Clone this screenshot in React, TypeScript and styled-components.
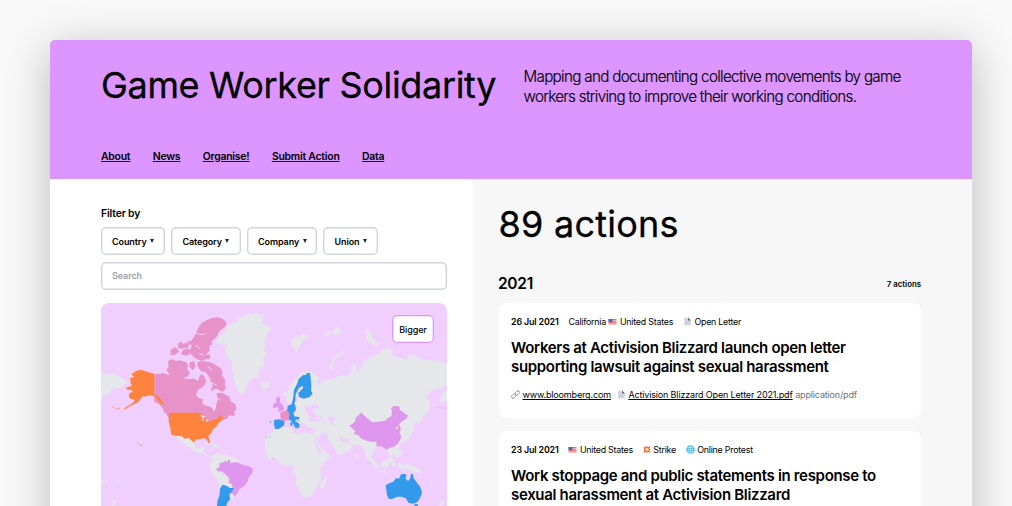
import React from "react";
import styled, { createGlobalStyle } from "styled-components";

const GlobalStyle = createGlobalStyle`
  * { box-sizing: border-box; }
  html, body { margin: 0; height: 506px; overflow: hidden; }
  body { background: #f9f9f9; color: #000; font-family: Inter, "Liberation Sans", sans-serif; }
  h1, h2, h3, p { margin: 0; }
  a { color: inherit; text-underline-offset: 1px; text-decoration-thickness: 1px; }
`;

const Stage = styled.div`
  height: 506px;
  padding: 40px 40px 0 50px;
  overflow: hidden;
`;

const Window = styled.div`
  width: 922px;
  height: 520px;
  border-radius: 5px 5px 0 0;
  background: #f7f7f7;
  box-shadow: 0 8px 46px rgba(0, 0, 0, 0.25);
`;

const Header = styled.header`
  height: 139.4px;
  padding: 24px 51px 0;
  border-radius: 5px 5px 0 0;
  background: #dd96ff;
`;

const Intro = styled.div`
  display: flex;
  height: 79px;
`;

const Title = styled.h1`
  width: 422.5px;
  font-size: 36px;
  line-height: 42px;
  font-weight: 400;
  letter-spacing: -0.34px;
  -webkit-text-stroke: 0.3px #000;
  white-space: nowrap;
`;

const Tagline = styled.p`
  padding-top: 2.5px;
  font-size: 15.2px;
  line-height: 20.5px;
  font-weight: 300;
  letter-spacing: -0.68px;
  -webkit-text-stroke: 0.15px #000;
  white-space: nowrap;
`;

const Nav = styled.nav`
  display: flex;
  gap: 22.5px;
  padding-top: 6.5px;
  font-size: 10.4px;
  line-height: 13px;
  font-weight: 600;
  letter-spacing: -0.22px;
`;

const Columns = styled.div`
  display: grid;
  grid-template-columns: 423px 1fr;
  height: 380px;
`;

const Sidebar = styled.aside`
  padding: 27.5px 26px 0 51px;
  background: #fff;
`;

const FilterLabel = styled.div`
  font-size: 10.4px;
  line-height: 14px;
  font-weight: 600;
  letter-spacing: -0.15px;
`;

const Filters = styled.div`
  display: flex;
  gap: 6.4px;
  margin-top: 6px;
`;

const FilterButton = styled.button<{ $width: number }>`
  display: flex;
  align-items: center;
  width: ${(p) => p.$width}px;
  height: 28.3px;
  padding: 0 0 0 11px;
  border: 0;
  border-radius: 5px;
  background: #fff;
  box-shadow: inset 0 0 0 1.4px #d1d5db;
  color: #000;
  font: 600 9px Inter, sans-serif;
  letter-spacing: -0.1px;
  white-space: nowrap;
`;

const Caret = styled.span`
  width: 0;
  height: 0;
  margin-left: 3.4px;
  border: 2px solid transparent;
  border-top: 4px solid #1f2937;
  border-bottom: 0;
`;

const SearchInput = styled.input`
  display: block;
  width: 346px;
  height: 28.3px;
  margin-top: 6.5px;
  padding: 0 11px;
  border: 0;
  border-radius: 5px;
  box-shadow: inset 0 0 0 1.4px #d1d5db;
  font: 600 9px Inter, sans-serif;
  letter-spacing: -0.1px;
  &::placeholder { color: #9ca3af; opacity: 1; }
`;

const MapPanel = styled.div`
  position: relative;
  width: 346px;
  height: 220px;
  margin-top: 13.3px;
  border-radius: 8px 8px 0 0;
  overflow: hidden;
  background: #f0cfff;
  svg { display: block; }
`;

const BiggerButton = styled.button`
  position: absolute;
  top: 12px;
  right: 13px;
  width: 42px;
  height: 28px;
  padding: 0;
  border: 0;
  border-radius: 5px;
  background: #fff;
  box-shadow: inset 0 0 0 1.3px #dd96ff;
  color: #000;
  font: 500 9px Inter, sans-serif;
  letter-spacing: -0.1px;
`;

const Feed = styled.main`
  padding: 23.5px 51px 0 25.5px;
`;

const Count = styled.h2`
  font-size: 36px;
  line-height: 42px;
  font-weight: 400;
  letter-spacing: 0.25px;
  -webkit-text-stroke: 0.3px #000;
`;

const YearRow = styled.div`
  display: flex;
  justify-content: space-between;
  align-items: center;
  height: 22px;
  margin: 27.8px 0 8.3px -0.5px;
`;

const Year = styled.h3`
  font-size: 15.5px;
  font-weight: 600;
  letter-spacing: -0.3px;
`;

const YearCount = styled.span`
  font-size: 7.8px;
  font-weight: 600;
  letter-spacing: 0.02px;
`;

const Card = styled.article`
  height: 115px;
  margin-bottom: 13px;
  padding: 12.2px 12.5px 0;
  border-radius: 8px;
  background: #fff;
`;

const Meta = styled.div`
  display: flex;
  gap: 9.8px;
  font-size: 8.9px;
  line-height: 13px;
  letter-spacing: -0.24px;
  white-space: nowrap;
  b { font-weight: 600; letter-spacing: -0.15px; }
`;

const Tag = styled.span`
  display: flex;
  align-items: center;
  gap: 2.5px;
`;

const Headline = styled.h3<{ $tracking: number }>`
  margin-top: 10px;
  font-size: 15px;
  line-height: 19.2px;
  font-weight: 600;
  letter-spacing: ${(p) => p.$tracking}px;
  white-space: nowrap;
`;

const Links = styled.div`
  display: flex;
  align-items: center;
  gap: 6px;
  margin-top: 11.8px;
  font-size: 9px;
  line-height: 13px;
  letter-spacing: -0.15px;
  white-space: nowrap;
`;

const Muted = styled.span`
  margin-left: -3.5px;
  color: #6b7280;
`;

const FlagIcon = () => (
  <svg width="9" height="9" viewBox="0 0 18 18">
    <path d="M1 4h16v10H1z" fill="#f3e3e6" />
    <path d="M1 5h16M1 8h16M1 11h16M1 14h16" stroke="#e24b57" strokeWidth="1.5" />
    <path d="M1 4h8v6H1z" fill="#3c6fb6" />
  </svg>
);

const PageIcon = () => (
  <svg width="9" height="9" viewBox="0 0 18 18">
    <path d="M2 1h8l6 6v10H2z" fill="#d9dde1" />
    <path d="M10 1v6h6z" fill="#5f6870" />
    <path d="M4 5h4M4 8h5M4 11h9M4 14h9" stroke="#b5bcc3" />
  </svg>
);

const LinkIcon = () => (
  <svg width="9" height="9" viewBox="0 0 18 18" fill="none" stroke="#6f8795" strokeWidth="1.7">
    <rect x="7.5" y="3" width="10" height="6" rx="3" transform="rotate(-45 12.5 6)" />
    <rect x="0.5" y="9" width="10" height="6" rx="3" transform="rotate(-45 5.5 12)" />
  </svg>
);

const BurstIcon = () => (
  <svg width="8" height="9" viewBox="0 0 18 18">
    <path d="M1 1l5 3 3-3 2 3 6-3-3 5 3 3-3 2 3 6-6-3-2 3-3-3-5 3 2-6-2-3 3-2z" fill="#fb5a36" />
    <path d="M6 6l3-1 3 1 1 3-1 3-3 1-3-1-1-3z" fill="#ffd24d" />
    <circle cx="9" cy="9" r="2" fill="#fff" />
  </svg>
);

const GlobeIcon = () => (
  <svg width="9" height="9" viewBox="0 0 18 18">
    <circle cx="9" cy="9" r="8.5" fill="#37b3e2" />
    <g fill="none" stroke="#d5f3ff" strokeWidth="1.1">
      <ellipse cx="9" cy="9" rx="4" ry="8" />
      <path d="M9 1v16M1 9h16M2.5 5h13M2.5 13h13" />
    </g>
  </svg>
);

const LAND = "#e5e7eb";
const PINK = "#e792c8";
const ORANGE = "#ff833d";
const BLUE = "#3399eb";
const VIOLET = "#df96ed";

const WorldMap = () => (
  <svg width="346" height="220" viewBox="101 303 346 220">
    <g transform="translate(95 300) scale(.33333)" strokeLinejoin="round">
      <g fill={LAND}>
        <path d="M362 130L371 110 388 98 398 78 414 70 430 65 426 53 445 51 453 42 472 43 481 38 503 45 506 58 498 69 514 75 530 82 527 91 516 103 508 123 512 138 506 151 515 162 504 177 509 194 498 206 490 210 490 230 472 235 461 245 453 257 447 280 437 283 429 272 420 250 416 238 417 218 409 204 415 188 406 178 392 163 390 151 395 138 377 131Z" />
        <path d="M496 250l8-5 7 4 9-3 5 8-7 8-10 5-10-5 2-6z" />
        <path d="M18 222l28 1 10-5 11 9 16 8 14 10-2 7-10 3-2 9-10 1-8-4-14 10-10 10-15 3-8 24z" />
        <path d="M66 208l10-1v5l-9 1zM20 539l4 6-1 10-5-2zM31 535l7 5-2 5-6-5zM64 542l8-4-2 6zM51 594l7 7 8 3-9 14h-7l5-12z" />
        <path d="M243 399l29 2 16 14 10 11 2 15 9 5 10-5 10 0 1 10-7 7 10 3 8 10 13-4 7 6-11 1-14-4-14-10-15-2-14-7-20-15-13-11-8-14 0 12-6-9z" />
        <path d="M329 429l16-3 15 7 9 4-12-1-15-5-12 2zM350 440l15-4 12 4-11 2z" />
        <path d="M355 466l13-7 9 5 12-2 14 7 17 5 13 9-11 4-19 1-15-5-9 6-4 17 5 15 17 8 12 10 1 14 10 8 8 5-7 8-8-6-10-5-13 1-7 13-6 40h-8l5-67-15-19-13-21-3-12 8-14zM405 587l11-8 2 14-11 8z" />
      </g>
      <g fill={PINK}>
        <path d="M178 222l14-1 13-2 14 6 13-3 14 8 14-1 14 8 24-1 11 7 4-13 6-8 8 6 6 17 9 9 14-1 1-23 13 8 3 20-5 7-14 4-10 12-15 7-8 18 5 8 10 3 13 5 9 13 5-13 1-16-5-10 8-17 15-1 15 9 7 4 3 13 12 7 5 10-1 10-16 7-11-2-5 7 10 5-5 8-13 4-10 7-18 2-10-5-7-5-12-6H220l-5-11-7-4-4-11-7-9-7-7-12-5z" />
        <path d="M219 183l14-5 8 5 14-2 19 6 6 11-5 8 10 13-9 13-15-2-13 3-10-7-14-2-10-13 7-11z" />
        <path d="M227 149l12-8 8 5 6 9-14 10-12 0zM249 133l8-8 9 7 8-5 8 7-3 13-15 1-14-4zM277 127l8-6 7 8-8 7zM264 149l19-3 7 14-17 7-15-4zM282 151l14-5 11 12 12-4 13 10 14 0-1 12-17 2-16-8-15 2-4-11z" />
        <path d="M299 107l11-24 10-14 14-8 17-7 17-2 16 5 11 11-5 13-17 12-6 14-8 9-10 7 3 10-9 6 1 13-9 10-6 18-10 3-14-6-16-12-4-14 5-14-4-10z" />
        <path d="M285 187l12-3 5 15-8 12-11-10zM306 187l16-4 16 2 15 4 12 8 12 8 6 12-3 9 11 14-2 12 4 12-8 11-13-4-12-10-9-13-13-5 3-14-9-12-15-4-9-14z" />
        <path d="M383 347l7-12 9-10 4-7 5 11 9 3 3 14-8 2-9-3-6 6zM320 235l13 4-3 12-10 3-8-9z" />
      </g>
      <path d="M301 98q20 11 34 1M338 199l14 12M350 248l15 8M361 292l16 9M300 136l16 10M312 160l14 6M262 146l22-2" fill="none" stroke="#f0cfff" strokeWidth="3" />
      <path d="M303 285l6-16 14-8 12-16 12-2 6 16-6 12 10 10 10 7 1 11-3 12-10-1-15-8-17-4-12-5zM334 228l8 2 6 10-8 4-8-6z" fill="#f0cfff" />
      <g fill={ORANGE}>
        <path d="M105 235l13-4-9-8 13-9 13-5 12 3 14 5 17 4v63l12 5 8 9 9 13-3 4-11-8-10-15-11-5-12-1-10 4-8-1-8 12-4 6-14 6-14 7-14 4 10-6 14-8 8-9-6-3-8-2-5-8 3-8 9-5-3-5-11-1-4-6 9-4 7 0-3-7z" />
        <path d="M93 263l7 2 2 4-8-2zM85 326l10-5 3 3-11 4zM68 324l8-1-3 4zM50 319l7 2-3 3zM61 325l7 1-4 3zM126 430l5 2-2 2zM133 432l8 4-3 3z" />
        <path d="M222 338H310l10 4 8 5 7 5-3 13 12-3 13-3 12-4 5-10 9 4-1 9-7 7-8 6-3 9-10 8-5 10-9 10 2 9 4 12-5 1-8-14-7-1-15 3-10 1-4 9-9-7-8-8-10 4-10-8-17-2-14-3L226 385l-5-20z" />
      </g>
      <path d="M313 345l14 2 6 5-8 2 1 8-5-1 1-8z" fill="#f0cfff" />
      <path d="M362 507l11-5 1-13 10-1 6-6 6 3 8-7 3 12 13-3 9 1 13 6 20 5 12 8-2 12-10 12-5 16-10 12-14 8-5 11-9 12-5-7-9-7 8-11-2-12-10-5 1-13-10-12-11-10-10 2z" fill={VIOLET} />
      <path d="M375 566l7-12 12 3 11 7 11 0-4 9-9 10 2 16-8 8-3 11H366l2-18 5-12z" fill={BLUE} />
    </g>
    <g transform="translate(270 300) scale(.33333)" strokeLinejoin="round">
      <g fill={LAND}>
        <path d="M64 118l10-8 13 2 9-10 16 4-1 10-11 3-1 10-9 3-4 15-8 10-5-12-9-10zM162 99l14-5 8 4-6 7-14 2zM188 92l16-12 4 8 8 6-14 13-10-5zM216 94l2-5-3 5zM285 94l14-3 9 13-2 9 19 17-5 12-13-12-11-3-9-13 3-12zM182 209l-3-8 8-10-3-9 9-10 10-11 20-9-3 8-18 12-12 14 1 17-8 8zM410 168l14-4 9 4 15 3-13 5-18 2z" />
        <path d="M51 286l5-21 11-17 12-17 14-12 16-5 15 1 15 12 11 9-8 9-3 11 16-6 7-10 15-2 16-3 13-7 14-3 15 4 8-11 1-18 10-12 6 9-1 14 10 8-1-18 12-4-3-13 18-8 20-9 18-13 20-12 15 7-4 16 11 6 18 1 14 8 9-2 11-9 19 5 16 8 22-5 14 7 23 2 8 4 18-2 20 1v62l-13 9-10 13-7 19-12 14-11 7-4-13 9-20 15-15 6-13-13 4-11 11-12-3-15 7-13 7-7 16 12 10-2 22-11 17-9 5-5 12-7 12-10-8-8 9 5 15-10 17-7 12-14 9-12 5-5 13 10 12-4 12-10 6-8-6-7-10-3 12 12 20 3 10-12-9-7-15-5-19-8-10-9-15-14 3-10 13-8 14-10 21-8-14-8-24-11-10-16-2-16-8-2-8-13-1-8-10-8 2 10 17 13 3 8-5 12 10-7 15-16 10-20 8-3-6-12-19-17-26-2-14-10-5-22 2-8-13 2-10 13-5 10-2 10-6-4-9-13-5-15-3-7-10 1-8 16-2 3-8-12-6-20 8-11-3-1 13 10 12-3 9-9-2-10-13-8-15-13-11-19 2-4-24-10-2 2-12 6-4-2-8z" />
        <path d="M78 290l8 20-2 14 14 12 22 14 36 2 20 8 0 36-26 4-2 14-20-8 10-14-20-10-20 2-16-24-10-20-2-28z" />
        <path d="M-15 410l15-6 14-18 17 0 18-6 17 3 5 15 18 4 10-5 23 3 10 6 11 18 10 18 14 15 11 5 0 8-16 20-10 13-2 14 6 17-10 12-3 13-10 13-8 14-14 6-14-1-9-19-11-23 4-17-10-15-1-17-8-5-14 1-17-4-11-16-14-6-6 14-8-14-7-12 0-14z" />
        <path d="M172 532l-4 16-9 16-8 1-1-15 7-8 8-10zM257 462l7 5-2 8-6-7zM298 470l11 6 12 15 7 12-3 7-11-9-11-15zM325 510l20 3 8 5-21-2zM336 485l13-3 9-10 7 3-3 13-10 14-13 0-5-9zM366 484l11-1-4 6 3 10-10-2zM359 427l6 1 4 16 8 13-8 3-8-15zM386 488l13 7 14-4 17 6 19 13 9 10-17-3-14-3-13-5-17-3-14-7zM342 434l11 0-4 8-7-2zM370 420l6-3-3 14-4-5z" />
        <path d="M398 389l16-2 8-10 6-18 9 10-7 11-6 8-15 3-12 7zM427 350l16 3-12 9-7-5zM419 310l7 16 7 18-7-3-9-19zM509 593l16 13-10 12h-9l7-10zM482 545l9 7-4 1-9-8zM466 510l10 10-5-1z" />
        <path d="M0 82l5 3-4 8z" />
      </g>
      <g fill="#f0cfff">
        <path d="M119 352l10-4 13 8 12 4-11 5-25-1zM151 346l11-1-10 10zM174 350l12-3 10 9-7 8 5 13-9-1-5-11-7-6zM104 237l5 13-10 8-12 16-3 15-5-2 2-15 13-23zM62 307l4-7 18-12 19-5-5 7-11 2-7 14-15 12zM131 424l5-3 15 27 5 15-8-4-13-22zM164 427l8 0 11 11-11 2z" />
        <path d="M94 366l10 4 8 14 14 6 2 8-20-2-12-4-22 4-6-14 12 8 16-2-6-14z" />
      </g>
      <g fill={BLUE}>
        <path d="M69 296l3-27 9-17 5-15 13-12 9 0 2-6 10 0 2 14 2 25-1 14 5 8-8 10-18 6-15-5-2-12 15-16-3-6-11 8-9 18-1 18-5 16-8 5z" />
        <path d="M53 317l19-6 4 5 2 13-8 11 3 7-16 3-6-15zM13 359l13-1 18 5-2 13-10 7-8 5-9-2-3-14zM51 344l18-2 3 7 18 3-5 6 4 6-11-7-2 7 13 8-2 13-14-8-10-15-10-7zM61 367h6v11h-5zM72 379l10 2-3 5z" />
        <path d="M347 556l11-6 12-5 9-11 8 2 6-13 10-1 7 2-4 11 8 8 6-6 3-16 5 1 4 14 10 14 9 11 5 18-6 15-7 11-12 6-15-2-9-15-13-4-12 0-16 7-10-1-5-11zM432 613h12v8h-9z" />
        <path d="M-12 410h3v3h-3zm10 0h5v2h-5zM0 360l3 7-3 2z" />
      </g>
      <g fill={VIOLET}>
        <path d="M238 377l10-6 8-7 0-10 8-6 10-11 9 10 14 12 10 8 16-2 22-3 9-8 10-5 2-15-3-9 8-7 16 1 3 11 10 7 9 7 5 1-4 11-8 5-12 8-5 9-10 5 10 6 8 0-5 7 6 15-9 19-13 11-15 2-4 6-6-2-12-8-15 0-1-14-14 0-13-2-18-7-8-10-15-4 5-8zM332 433l7 0-3 7zM19 294l8-5 3 7-1 10 9 10 5 9-3 6-18 4 5-9-9-11zM9 314l8-6 7 5-4 9-11 2z" />
      </g>
      <path d="M31 337l10-3 8-5 7 8 3 7-3 11 2 7-11-1-7 2-8-4-1-13zM383 381l5-5 4 8-2 9-6-3zM507 319l4 3-3 1zM513 322l5 2-2 2zM521 326l5 2-2 2z" fill={PINK} />
    </g>
  </svg>
);

const filters = [
  { label: "Country", width: 64 },
  { label: "Category", width: 69.3 },
  { label: "Company", width: 70 },
  { label: "Union", width: 54.7 },
];

export default function App() {
  return (
    <>
      <GlobalStyle />
      <Stage>
        <Window>
          <Header>
            <Intro>
              <Title>Game Worker Solidarity</Title>
              <Tagline>
                Mapping and documenting collective movements by game
                <br />
                workers striving to improve their working conditions.
              </Tagline>
            </Intro>
            <Nav>
              {["About", "News", "Organise!", "Submit Action", "Data"].map((item) => (
                <a key={item} href="#">{item}</a>
              ))}
            </Nav>
          </Header>
          <Columns>
            <Sidebar>
              <FilterLabel>Filter by</FilterLabel>
              <Filters>
                {filters.map((f) => (
                  <FilterButton key={f.label} $width={f.width}>
                    {f.label}
                    <Caret />
                  </FilterButton>
                ))}
              </Filters>
              <SearchInput placeholder="Search" />
              <MapPanel>
                <WorldMap />
                <BiggerButton>Bigger</BiggerButton>
              </MapPanel>
            </Sidebar>
            <Feed>
              <Count>89 actions</Count>
              <YearRow>
                <Year>2021</Year>
                <YearCount>7 actions</YearCount>
              </YearRow>
              <Card>
                <Meta>
                  <b>26 Jul 2021</b>
                  <Tag>California <FlagIcon /> United States</Tag>
                  <Tag><PageIcon />Open Letter</Tag>
                </Meta>
                <Headline $tracking={-0.33}>
                  Workers at Activision Blizzard launch open letter
                  <br />
                  supporting lawsuit against sexual harassment
                </Headline>
                <Links>
                  <Tag><LinkIcon /><a href="#">www.bloomberg.com</a></Tag>
                  <Tag><PageIcon /><a href="#">Activision Blizzard Open Letter 2021.pdf</a></Tag>
                  <Muted>application/pdf</Muted>
                </Links>
              </Card>
              <Card>
                <Meta>
                  <b>23 Jul 2021</b>
                  <Tag><FlagIcon />United States</Tag>
                  <Tag><BurstIcon />Strike</Tag>
                  <Tag><GlobeIcon />Online Protest</Tag>
                </Meta>
                <Headline $tracking={-0.32}>
                  Work stoppage and public statements in response to
                  <br />
                  sexual harassment at Activision Blizzard
                </Headline>
              </Card>
            </Feed>
          </Columns>
        </Window>
      </Stage>
    </>
  );
}
